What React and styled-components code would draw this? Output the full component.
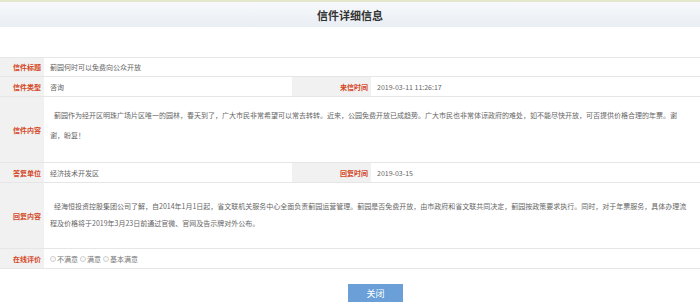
import React from 'react';
import styled, { createGlobalStyle } from 'styled-components';

const GlobalStyle = createGlobalStyle`
  html, body {
    margin: 0;
    padding: 0;
    background: #fff;
  }
  body {
    font-family: "Noto Sans CJK SC", "Noto Sans", sans-serif;
  }
`;

const Page = styled.div`
  width: 700px;
  border-top: 2px solid #e4e7cc;
`;

const Header = styled.div`
  height: 25px;
  display: flex;
  align-items: center;
  justify-content: center;
  background: linear-gradient(#f7f9fb, #e9eef4);
  color: #333;
  font-size: 11px;
  font-weight: bold;
`;

const Table = styled.div`
  margin-top: 30px;
  border-top: 1px solid #e6e6e6;
`;

const Row = styled.div`
  display: flex;
  height: ${p => p.$h}px;
  border-bottom: 1px solid #e6e6e6;
  box-sizing: border-box;
`;

const Label = styled.div`
  width: ${p => p.$w || 44}px;
  flex-shrink: 0;
  background: #f1f1f1;
  color: #d4471f;
  font-size: 7px;
  font-weight: bold;
  display: flex;
  align-items: center;
  justify-content: flex-end;
  padding-right: 3px;
  box-sizing: border-box;
`;

const Value = styled.div`
  flex: ${p => (p.$w ? 'none' : 1)};
  width: ${p => (p.$w ? `${p.$w}px` : 'auto')};
  display: flex;
  align-items: center;
  padding: 0 6px;
  box-sizing: border-box;
  color: #666;
  font-size: 7px;
`;

const Para = styled.div`
  flex: 1;
  align-self: flex-start;
  padding: ${p => p.$top}px 12px 0 6px;
  color: #666;
  font-size: 7px;
  line-height: ${p => p.$lh}px;
  text-indent: 4px;
`;

const Options = styled.div`
  display: flex;
  align-items: center;
  gap: 2px;
`;

const Option = styled.label`
  display: flex;
  align-items: center;
  color: #777;
  font-size: 7px;
`;

const Radio = styled.input.attrs({ type: 'radio' })`
  appearance: none;
  width: 6px;
  height: 6px;
  margin: 0 1px 0 0;
  border: 1px solid #cfcfcf;
  border-radius: 50%;
  background: #fafafa;
  box-sizing: border-box;
`;

const Footer = styled.div`
  display: flex;
  justify-content: center;
  padding-top: 15px;
`;

const Button = styled.button`
  width: 55px;
  height: 19px;
  border: none;
  background: #6a9fd7;
  color: #fff;
  font-family: inherit;
  font-size: 9px;
  padding: 0;
  margin-left: 51px;
  cursor: pointer;
`;

export default function App() {
  return (
    <>
      <GlobalStyle />
      <Page>
        <Header>信件详细信息</Header>
        <Table>
          <Row $h={19}>
            <Label>信件标题</Label>
            <Value>蓟园何时可以免费向公众开放</Value>
          </Row>
          <Row $h={20}>
            <Label>信件类型</Label>
            <Value $w={248}>咨询</Value>
            <Label $w={79}>来信时间</Label>
            <Value>2019-03-11 11:26:17</Value>
          </Row>
          <Row $h={66}>
            <Label>信件内容</Label>
            <Para $top={8} $lh={20}>
              蓟园作为经开区明珠广场片区唯一的园林，春天到了，广大市民非常希望可以常去转转。近来，公园免费开放已成趋势。广大市民也非常体谅政府的难处，如不能尽快开放，可否提供价格合理的年票。谢<br />谢，盼复！
            </Para>
          </Row>
          <Row $h={20}>
            <Label>答复单位</Label>
            <Value $w={248}>经济技术开发区</Value>
            <Label $w={79}>回复时间</Label>
            <Value>2019-03-15</Value>
          </Row>
          <Row $h={66}>
            <Label>回复内容</Label>
            <Para $top={15} $lh={17}>
              经海恒投资控股集团公司了解，自2014年1月1日起，省文联机关服务中心全面负责蓟园运营管理。蓟园是否免费开放，由市政府和省文联共同决定，蓟园按政策要求执行。同时，对于年票服务，具体办理流程及价格将于2019年3月23日前通过官微、官网及告示牌对外公布。
            </Para>
          </Row>
          <Row $h={20}>
            <Label>在线评价</Label>
            <Value>
              <Options>
                <Option><Radio name="pj" />不满意</Option>
                <Option><Radio name="pj" />满意</Option>
                <Option><Radio name="pj" />基本满意</Option>
              </Options>
            </Value>
          </Row>
        </Table>
        <Footer>
          <Button>关闭</Button>
        </Footer>
      </Page>
    </>
  );
}
